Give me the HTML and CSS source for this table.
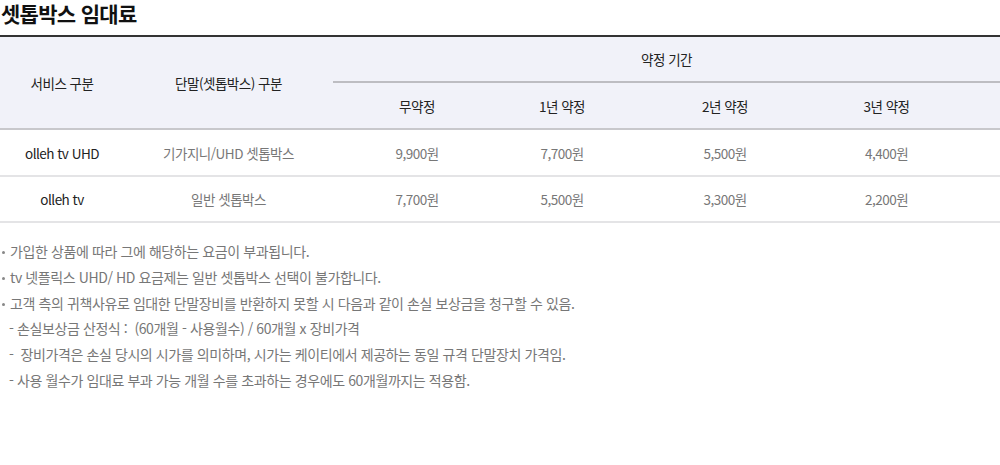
FILE: index.html
```html
<!DOCTYPE html>
<html lang="ko">
<head>
<meta charset="utf-8">
<title>셋톱박스 임대료</title>
<link rel="stylesheet" href="styles.css">
</head>
<body>
<div class="page">
  <h2 class="title">셋톱박스 임대료</h2>
  <table class="fee">
    <colgroup>
      <col class="c1"><col class="c2"><col class="c3"><col class="c4"><col class="c5"><col class="c6">
    </colgroup>
    <thead>
      <tr class="hr1">
        <th rowspan="2">서비스 구분</th>
        <th rowspan="2">단말(셋톱박스) 구분</th>
        <th colspan="4" class="period">약정 기간</th>
      </tr>
      <tr class="hr2">
        <th>무약정</th>
        <th>1년 약정</th>
        <th>2년 약정</th>
        <th class="last">3년 약정</th>
      </tr>
    </thead>
    <tbody>
      <tr>
        <td class="svc">olleh tv UHD</td>
        <td>기가지니/UHD 셋톱박스</td>
        <td>9,900원</td>
        <td>7,700원</td>
        <td>5,500원</td>
        <td class="last">4,400원</td>
      </tr>
      <tr>
        <td class="svc">olleh tv</td>
        <td>일반 셋톱박스</td>
        <td>7,700원</td>
        <td>5,500원</td>
        <td>3,300원</td>
        <td class="last">2,200원</td>
      </tr>
    </tbody>
  </table>
  <ul class="notes">
    <li class="dot">가입한 상품에 따라 그에 해당하는 요금이 부과됩니다.</li>
    <li class="dot">tv 넷플릭스 UHD/ HD 요금제는 일반 셋톱박스 선택이 불가합니다.</li>
    <li class="dot">고객 측의 귀책사유로 임대한 단말장비를 반환하지 못할 시 다음과 같이 손실 보상금을 청구할 수 있음.</li>
    <li class="dash">- 손실보상금 산정식 :  (60개월 - 사용월수) / 60개월 x 장비가격</li>
    <li class="dash">-  장비가격은 손실 당시의 시가를 의미하며, 시가는 케이티에서 제공하는 동일 규격 단말장치 가격임.</li>
    <li class="dash">- 사용 월수가 임대료 부과 가능 개월 수를 초과하는 경우에도 60개월까지는 적용함.</li>
  </ul>
</div>
</body>
</html>
```

FILE: styles.css
```css
* { box-sizing: border-box; }
html, body { margin: 0; padding: 0; background: #fff; }
body {
  font-family: "Noto Sans CJK KR", "Noto Sans", sans-serif;
  color: #222;
  width: 1000px;
}
.page { padding: 0; }
.title {
  margin: 0;
  height: 35px;
  font-size: 21px;
  font-weight: 700;
  line-height: 26px;
  letter-spacing: -0.7px;
  color: #111;
  padding-left: 1px;
}
.fee {
  width: 1000px;
  border-collapse: collapse;
  table-layout: fixed;
  border-top: 2px solid #333;
  font-size: 13.5px;
  letter-spacing: -0.5px;
}
.c1 { width: 124px; }
.c2 { width: 209px; }
.c3 { width: 168px; }
.c4 { width: 122px; }
.c5 { width: 204px; }
.c6 { width: 173px; }
.fee thead th {
  background: #f1f2f9;
  font-weight: 400;
  color: #222;
  text-align: center;
  padding: 0;
}
.hr1 th { height: 46px; }
.hr1 th[rowspan] { border-bottom: 2px solid #c8c8cc; }
.hr1 .period { border-bottom: 2px solid #bdbdc2; }
.hr2 th { height: 47px; border-bottom: 2px solid #c8c8cc; }
.fee .last { padding-right: 54px; }
.fee tbody td {
  text-align: center;
  color: #777;
  padding: 0;
  height: 46px;
  border-bottom: 2px solid #e4e4e6;
}
.fee tbody tr:first-child td { height: 47px; }
.fee tbody td.svc { color: #222; }
.notes {
  list-style: none;
  margin: 16px 0 0;
  padding: 0;
  font-size: 14px;
  letter-spacing: -0.4px;
  color: #777;
}
.notes li {
  line-height: 25.8px;
  white-space: pre;
}
.notes li.dot { padding-left: 10px; position: relative; }
.notes li.dot::before {
  content: "";
  position: absolute;
  left: 2px;
  top: 12px;
  width: 3px;
  height: 3px;
  border-radius: 50%;
  background: #888;
}
.notes li.dash { padding-left: 9px; }
```
